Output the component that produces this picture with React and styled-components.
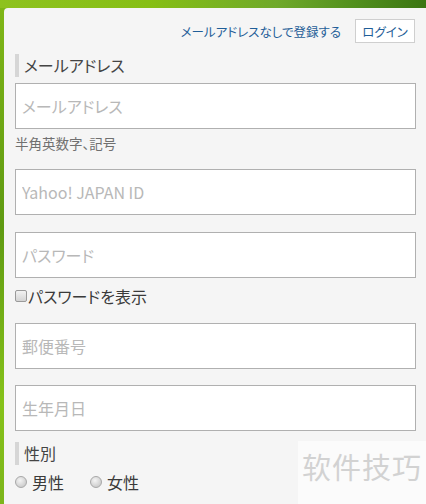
import React from "react";
import styled, { createGlobalStyle } from "styled-components";

const GlobalStyle = createGlobalStyle`
  html, body {
    margin: 0;
    padding: 0;
    height: 100%;
  }
  body {
    background: linear-gradient(90deg, #8ec21e 0%, #86bf14 35%, #6fa92a 65%, #4f8d1c 85%, #3b7512 100%);
    font-family: "Noto Sans CJK JP", "Noto Sans", sans-serif;
    font-feature-settings: "palt";
    overflow: hidden;
  }
  #root {
    height: 100%;
  }
`;

const Page = styled.div`
  position: relative;
  height: 100%;
  padding-top: 8px;
  box-sizing: border-box;
  background: linear-gradient(180deg, transparent 0, transparent 8px, #7fb617 8px, #5f9a12 45%, #86c21a 80%, #7cb51b 100%);
`;

const Panel = styled.div`
  margin-left: 4px;
  height: 100%;
  background: #f5f5f5;
  border-top-left-radius: 4px;
  padding: 11px 10px 0 11px;
  box-sizing: border-box;
  display: flex;
  flex-direction: column;
`;

const Header = styled.div`
  display: flex;
  justify-content: flex-end;
  align-items: center;
  gap: 14px;
`;

const HeaderLink = styled.a`
  color: #1f5e98;
  font-size: 12.5px;
  text-decoration: none;
`;

const LoginButton = styled.button`
  width: 60px;
  height: 24px;
  background: #fff;
  border: 1px solid #cfcfcf;
  color: #1f5e98;
  font-family: inherit;
  font-feature-settings: "palt";
  font-size: 12.5px;
  padding: 0;
  margin-right: 1px;
`;

const SectionLabel = styled.div`
  margin-top: ${(p) => p.$top}px;
  border-left: 4px solid #d6d6d6;
  padding-left: 5px;
  height: 23px;
  line-height: 23px;
  font-size: 16px;
  color: #444;
`;

const TextInput = styled.input`
  display: block;
  margin-top: ${(p) => p.$top}px;
  width: 100%;
  height: 46px;
  box-sizing: border-box;
  border: 1px solid #b0b0b0;
  background: #fff;
  padding: 0 6px;
  font-family: inherit;
  font-feature-settings: "palt";
  font-size: 16px;
  outline: none;
  &::placeholder {
    color: #b8b8b8;
  }
`;

const Hint = styled.div`
  margin-top: 5px;
  font-size: 13.5px;
  line-height: 18px;
  color: #707070;
`;

const CheckRow = styled.label`
  margin-top: 8px;
  display: flex;
  align-items: center;
  height: 20px;
  font-size: 16px;
  color: #3a3a3a;
`;

const CheckBox = styled.input`
  appearance: none;
  margin: 0 1px 0 0;
  width: 12px;
  height: 12px;
  border: 1px solid #9a9a9a;
  border-radius: 2px;
  background: linear-gradient(180deg, #f2f2f2, #d4d4d4);
  box-sizing: border-box;
`;

const RadioRow = styled.div`
  margin-top: 6px;
  display: flex;
  align-items: center;
  gap: 26px;
  height: 22px;
`;

const RadioLabel = styled.label`
  display: flex;
  align-items: center;
  gap: 5px;
  font-size: 16px;
  color: #3a3a3a;
`;

const Radio = styled.input`
  appearance: none;
  margin: 0;
  width: 12px;
  height: 12px;
  border-radius: 50%;
  border: 1px solid #a8a8a8;
  background: radial-gradient(circle at 40% 35%, #f4f4f4, #cfcfcf 70%);
  box-sizing: border-box;
`;

const Watermark = styled.div`
  position: absolute;
  right: 0;
  bottom: 0;
  width: 128px;
  height: 63px;
  background: #fbfbfb;
  display: flex;
  align-items: center;
  justify-content: center;
  font-family: "Noto Sans CJK SC", sans-serif;
  font-size: 29px;
  color: #d2d2d2;
  letter-spacing: 1px;
  padding-bottom: 14px;
  box-sizing: border-box;
`;

export default function App() {
  return (
    <>
      <GlobalStyle />
      <Page>
        <Panel>
          <Header>
            <HeaderLink href="#">メールアドレスなしで登録する</HeaderLink>
            <LoginButton>ログイン</LoginButton>
          </Header>

          <SectionLabel $top={11}>メールアドレス</SectionLabel>
          <TextInput $top={6} placeholder="メールアドレス" />
          <Hint>半角英数字、記号</Hint>

          <TextInput $top={17} placeholder="Yahoo! JAPAN ID" />
          <TextInput $top={17} type="password" placeholder="パスワード" />
          <CheckRow>
            <CheckBox type="checkbox" />
            パスワードを表示
          </CheckRow>

          <TextInput $top={17} placeholder="郵便番号" />
          <TextInput $top={16} placeholder="生年月日" />

          <SectionLabel $top={11}>性別</SectionLabel>
          <RadioRow>
            <RadioLabel>
              <Radio type="radio" name="sex" />
              男性
            </RadioLabel>
            <RadioLabel>
              <Radio type="radio" name="sex" />
              女性
            </RadioLabel>
          </RadioRow>
        </Panel>
        <Watermark>软件技巧</Watermark>
      </Page>
    </>
  );
}
